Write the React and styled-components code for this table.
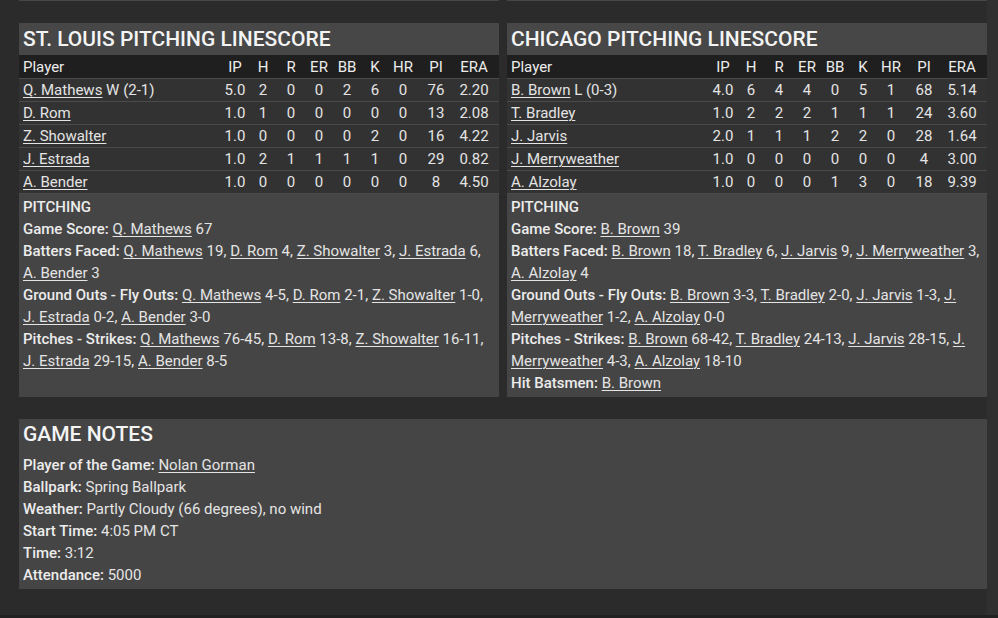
import React from 'react';
import styled, { createGlobalStyle } from 'styled-components';

const GlobalStyle = createGlobalStyle`
  html, body {
    margin: 0;
    padding: 0;
    background: #2b2b2b;
  }
  body {
    font-family: Roboto, "Liberation Sans", Arial, sans-serif;
    color: #e6e6e6;
  }
`;

const Page = styled.div`
  display: flex;
  flex-direction: column;
  width: 998px;
  height: 618px;
  overflow: hidden;
`;
const Body = styled.div`
  flex: 1;
  display: flex;
  min-height: 0;
`;
const Main = styled.div`
  flex: 1;
  padding-left: 19px;
  display: flex;
  flex-direction: column;
`;
const Track = styled.div`
  width: 11px;
  background: #303030;
`;
const Footer = styled.div`
  height: 3px;
  background: #212121;
`;
const Columns = styled.div`
  display: grid;
  grid-template-columns: 480px 480px;
  column-gap: 8px;
`;
const StubRow = styled(Columns)`
  height: 1px;
  margin-bottom: 22px;
`;
const Stub = styled.div`
  background: #474747;
`;
const Panel = styled.div`
  background: #454545;
  display: flex;
  flex-direction: column;
`;
const Title = styled.div`
  height: 32px;
  line-height: 32px;
  padding: 0 4px;
  font-size: 21px;
  font-weight: 500;
  color: #f4f4f4;
  background: #474747;
  text-transform: uppercase;
`;
const Row = styled.div`
  display: grid;
  grid-template-columns: 1fr repeat(7, 28px) 38px 38px;
  align-items: center;
  height: ${(p) => (p.head ? '23px' : '22px')};
  padding: 0 6px 0 4px;
  font-size: 15px;
  background: ${(p) => (p.head ? '#1f1f1f' : '#323232')};
  border-top: ${(p) => (p.head ? 'none' : '1px solid #4b4b4b')};
  color: ${(p) => (p.head ? '#ececec' : '#e4e4e4')};
`;
const Cell = styled.span`
  text-align: center;
  white-space: nowrap;
`;
const Name = styled.span`
  white-space: nowrap;
`;
const Link = styled.a`
  color: inherit;
  text-decoration: underline;
  text-underline-offset: 2px;
  text-decoration-thickness: 1px;
  cursor: pointer;
`;
const Notes = styled.div`
  flex: 1;
  border-top: 1px solid #4b4b4b;
  padding: 2px 4px 3px 4px;
  font-size: 15px;
  line-height: 22px;
  color: #e4e4e4;
`;
const Line = styled.div``;
const Label = styled.span`
  font-weight: 500;
  color: #ececec;
`;
const NotesPanel = styled(Panel)`
  margin-top: 22px;
  width: 968px;
`;
const NotesTitle = styled(Title)`
  background: transparent;
  height: 30px;
  line-height: 30px;
`;
const NotesBody = styled.div`
  padding: 5px 4px 3px 4px;
  font-size: 15px;
  line-height: 22px;
  color: #e4e4e4;
`;

const COLS = ['IP', 'H', 'R', 'ER', 'BB', 'K', 'HR', 'PI', 'ERA'];

const teams = [
  {
    title: 'St. Louis Pitching Linescore',
    rows: [
      ['Q. Mathews', ' W (2-1)', '5.0', 2, 0, 0, 2, 6, 0, 76, '2.20'],
      ['D. Rom', '', '1.0', 1, 0, 0, 0, 0, 0, 13, '2.08'],
      ['Z. Showalter', '', '1.0', 0, 0, 0, 0, 2, 0, 16, '4.22'],
      ['J. Estrada', '', '1.0', 2, 1, 1, 1, 1, 0, 29, '0.82'],
      ['A. Bender', '', '1.0', 0, 0, 0, 0, 0, 0, 8, '4.50'],
    ],
    notes: [
      ['Game Score', [['Q. Mathews', '67']]],
      ['Batters Faced', [['Q. Mathews', '19'], ['D. Rom', '4'], ['Z. Showalter', '3'], ['J. Estrada', '6'], ['A. Bender', '3']]],
      ['Ground Outs - Fly Outs', [['Q. Mathews', '4-5'], ['D. Rom', '2-1'], ['Z. Showalter', '1-0'], ['J. Estrada', '0-2'], ['A. Bender', '3-0']]],
      ['Pitches - Strikes', [['Q. Mathews', '76-45'], ['D. Rom', '13-8'], ['Z. Showalter', '16-11'], ['J. Estrada', '29-15'], ['A. Bender', '8-5']]],
    ],
  },
  {
    title: 'Chicago Pitching Linescore',
    rows: [
      ['B. Brown', ' L (0-3)', '4.0', 6, 4, 4, 0, 5, 1, 68, '5.14'],
      ['T. Bradley', '', '1.0', 2, 2, 2, 1, 1, 1, 24, '3.60'],
      ['J. Jarvis', '', '2.0', 1, 1, 1, 2, 2, 0, 28, '1.64'],
      ['J. Merryweather', '', '1.0', 0, 0, 0, 0, 0, 0, 4, '3.00'],
      ['A. Alzolay', '', '1.0', 0, 0, 0, 1, 3, 0, 18, '9.39'],
    ],
    notes: [
      ['Game Score', [['B. Brown', '39']]],
      ['Batters Faced', [['B. Brown', '18'], ['T. Bradley', '6'], ['J. Jarvis', '9'], ['J. Merryweather', '3'], ['A. Alzolay', '4']]],
      ['Ground Outs - Fly Outs', [['B. Brown', '3-3'], ['T. Bradley', '2-0'], ['J. Jarvis', '1-3'], ['J. Merryweather', '1-2'], ['A. Alzolay', '0-0']]],
      ['Pitches - Strikes', [['B. Brown', '68-42'], ['T. Bradley', '24-13'], ['J. Jarvis', '28-15'], ['J. Merryweather', '4-3'], ['A. Alzolay', '18-10']]],
      ['Hit Batsmen', [['B. Brown', '']]],
    ],
  },
];

const StatLine = ({ label, items }) => (
  <Line>
    <Label>{label}:</Label>{' '}
    {items.map(([name, val], i) => (
      <React.Fragment key={name}>
        <Link>{name}</Link>
        {val ? ` ${val}` : ''}
        {i < items.length - 1 ? ', ' : ''}
      </React.Fragment>
    ))}
  </Line>
);

const Linescore = ({ team }) => (
  <Panel>
    <Title>{team.title}</Title>
    <Row head>
      <span>Player</span>
      {COLS.map((c) => (
        <Cell key={c}>{c}</Cell>
      ))}
    </Row>
    {team.rows.map(([name, dec, ...stats]) => (
      <Row key={name}>
        <Name>
          <Link>{name}</Link>
          {dec}
        </Name>
        {stats.map((s, i) => (
          <Cell key={i}>{s}</Cell>
        ))}
      </Row>
    ))}
    <Notes>
      <Line>
        <Label>PITCHING</Label>
      </Line>
      {team.notes.map(([label, items]) => (
        <StatLine key={label} label={label} items={items} />
      ))}
    </Notes>
  </Panel>
);

export default function App() {
  return (
    <Page>
      <GlobalStyle />
      <Body>
        <Main>
          <StubRow>
            <Stub />
            <Stub />
          </StubRow>
          <Columns>
            {teams.map((t) => (
              <Linescore key={t.title} team={t} />
            ))}
          </Columns>
          <NotesPanel>
            <NotesTitle>Game Notes</NotesTitle>
            <NotesBody>
              <Line>
                <Label>Player of the Game:</Label> <Link>Nolan Gorman</Link>
              </Line>
              <Line>
                <Label>Ballpark:</Label> Spring Ballpark
              </Line>
              <Line>
                <Label>Weather:</Label> Partly Cloudy (66 degrees), no wind
              </Line>
              <Line>
                <Label>Start Time:</Label> 4:05 PM CT
              </Line>
              <Line>
                <Label>Time:</Label> 3:12
              </Line>
              <Line>
                <Label>Attendance:</Label> 5000
              </Line>
            </NotesBody>
          </NotesPanel>
        </Main>
        <Track />
      </Body>
      <Footer />
    </Page>
  );
}
